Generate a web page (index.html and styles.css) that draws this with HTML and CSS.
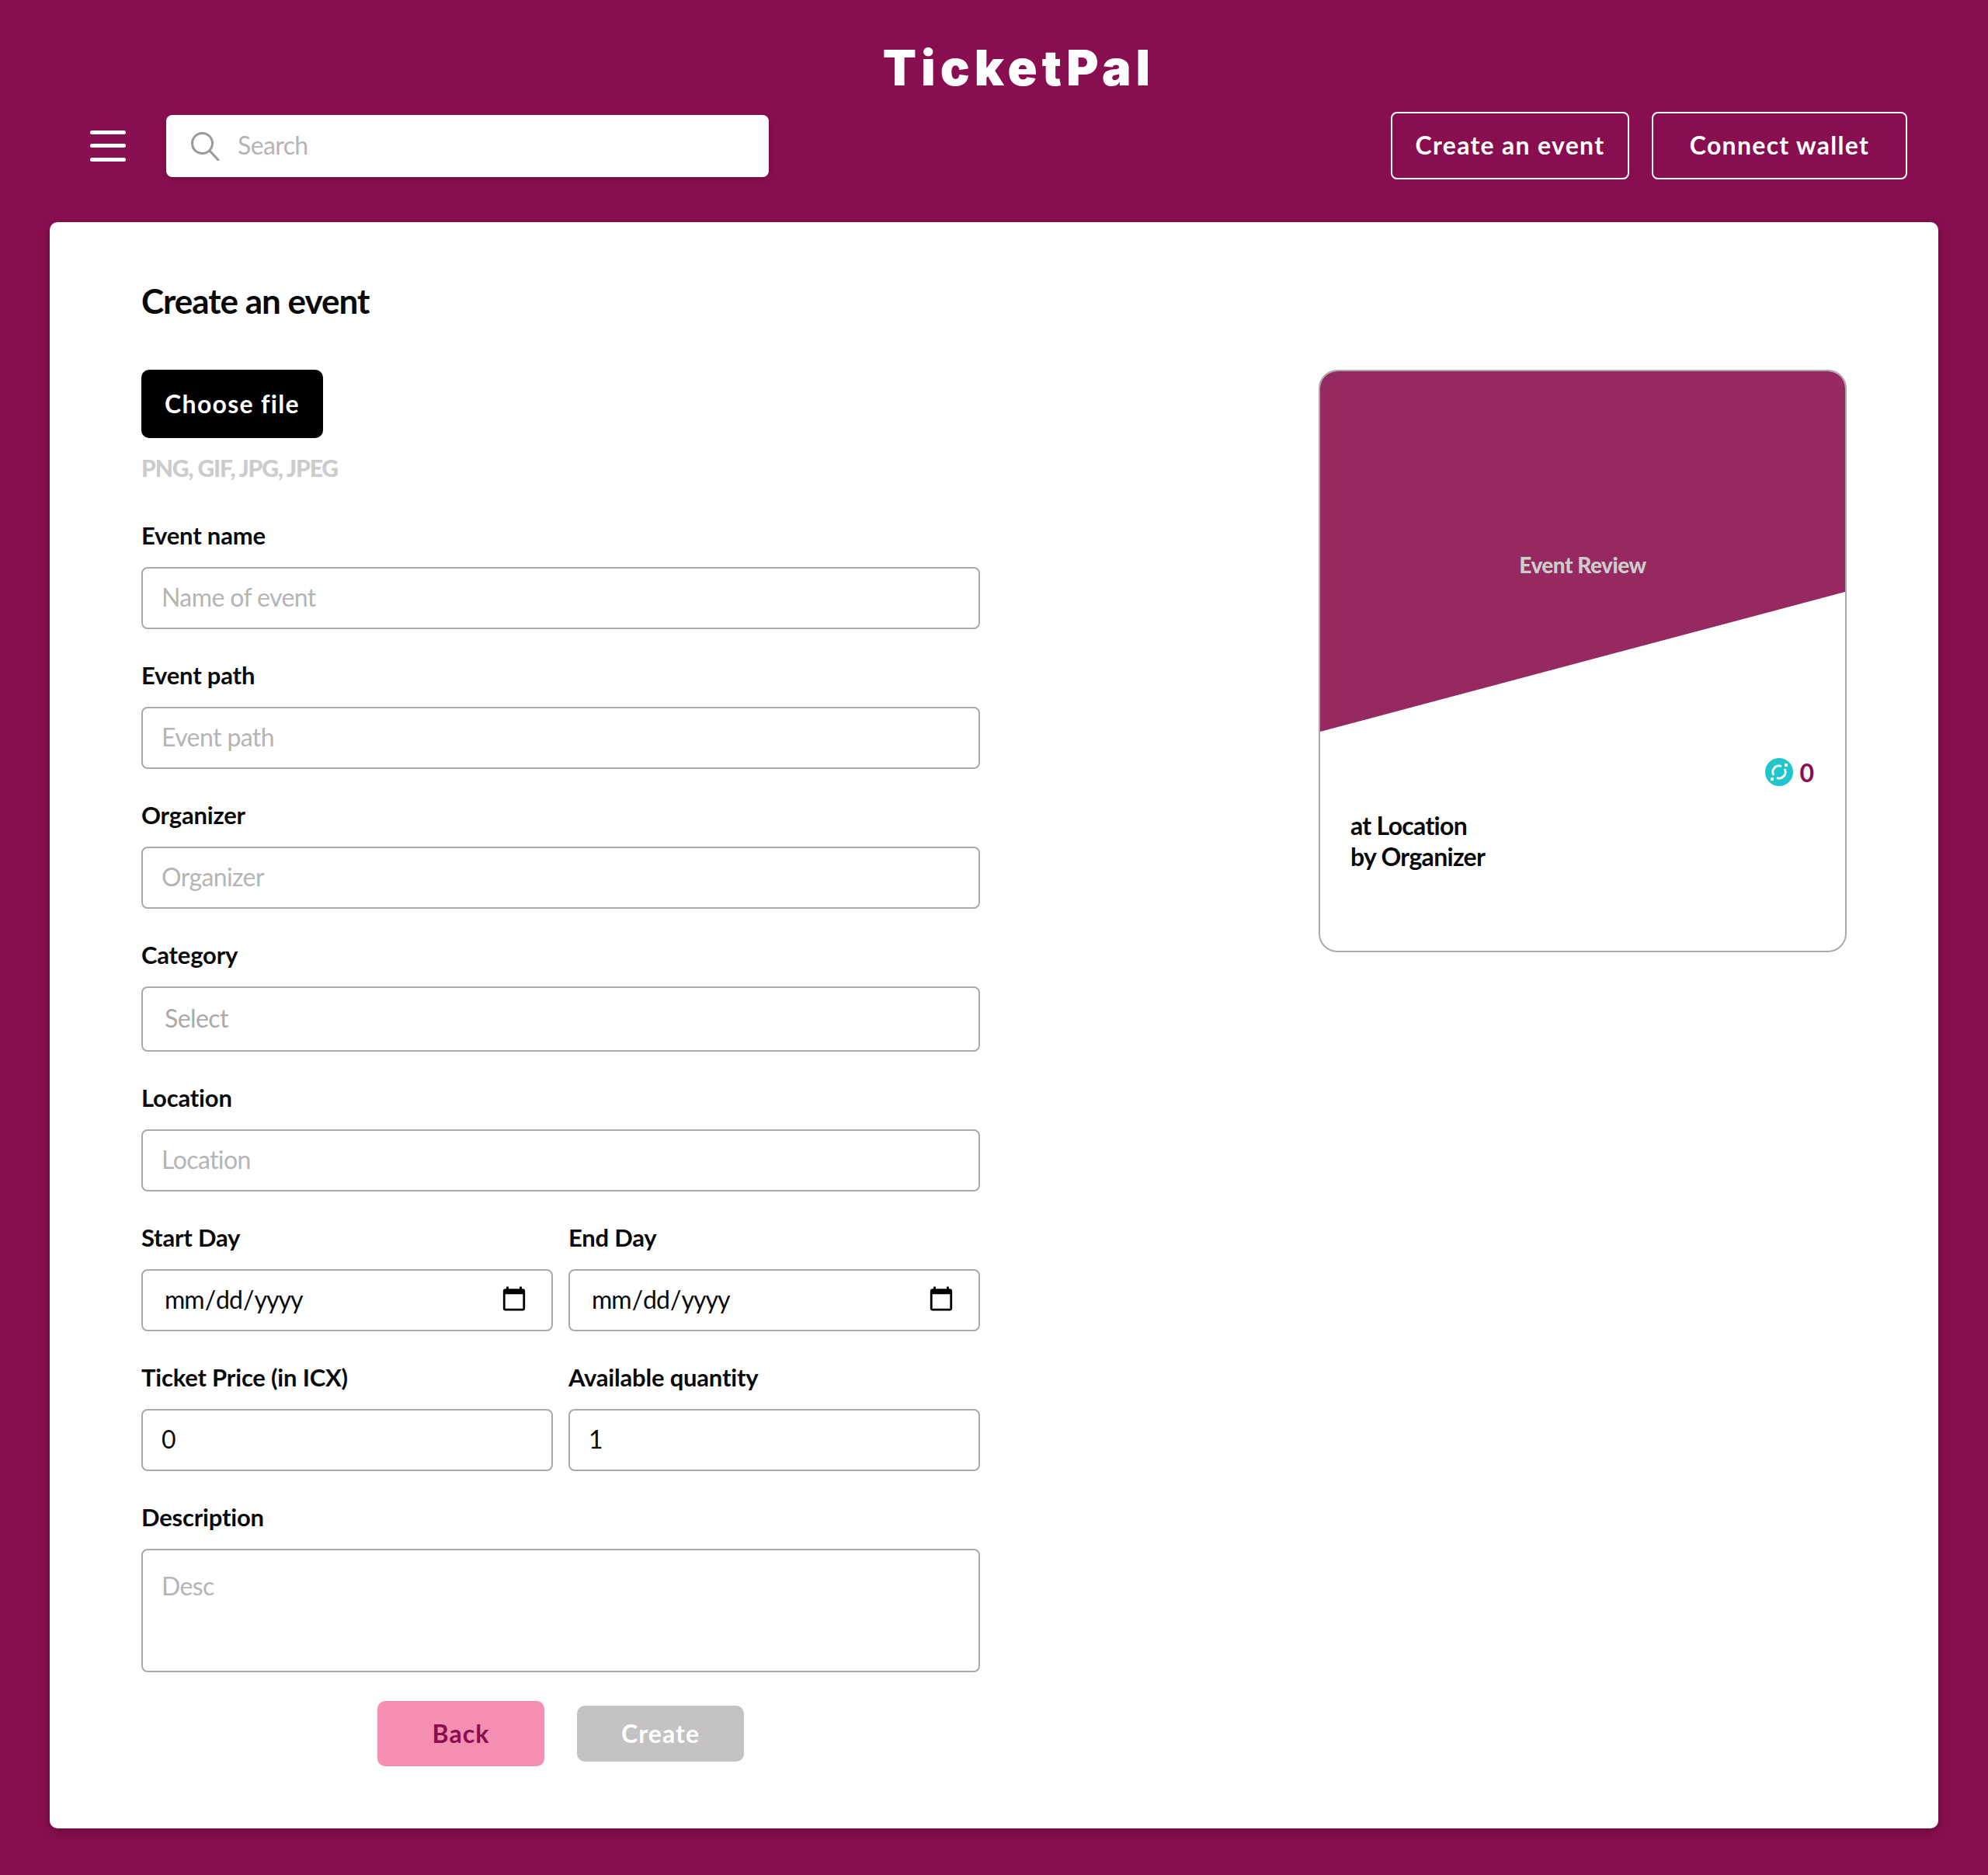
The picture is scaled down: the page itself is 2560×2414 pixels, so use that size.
FILE: index.html
```html
<!DOCTYPE html>
<html lang="en">
<head>
  <meta charset="UTF-8">
  <title>TicketPal</title>
  <link rel="stylesheet" href="styles.css">
</head>
<body>
  <header class="site-header">
    <h1 class="brand">TicketPal</h1>
    <div class="nav-row">
      <div class="menu-icon"><span></span><span></span><span></span></div>
      <div class="search-box">
        <svg class="search-icon" viewBox="0 0 38 38" fill="none" stroke="#999" stroke-width="3">
          <circle cx="15.5" cy="15.5" r="13"/>
          <path d="M25 25 L36 37" stroke-linecap="round"/>
        </svg>
        <input class="search-input" type="text" placeholder="Search">
      </div>
      <div class="nav-actions">
        <button class="outline-btn create-link">Create an event</button>
        <button class="outline-btn wallet-link">Connect wallet</button>
      </div>
    </div>
  </header>

  <main class="panel">
    <section class="form-col">
      <h2 class="page-title">Create an event</h2>
      <button class="file-btn">Choose file</button>
      <p class="file-hint">PNG, GIF, JPG, JPEG</p>

      <div class="form-group">
        <label for="name">Event name</label>
        <input id="name" type="text" placeholder="Name of event">
      </div>
      <div class="form-group">
        <label for="path">Event path</label>
        <input id="path" type="text" placeholder="Event path">
      </div>
      <div class="form-group">
        <label for="organizer">Organizer</label>
        <input id="organizer" type="text" placeholder="Organizer">
      </div>
      <div class="form-group">
        <label for="category">Category</label>
        <select id="category">
          <option>Select</option>
        </select>
      </div>
      <div class="form-group">
        <label for="location">Location</label>
        <input id="location" type="text" placeholder="Location">
      </div>
      <div class="form-row">
        <div class="form-group">
          <label for="start">Start Day</label>
          <input id="start" type="date">
        </div>
        <div class="form-group">
          <label for="end">End Day</label>
          <input id="end" type="date">
        </div>
      </div>
      <div class="form-row">
        <div class="form-group">
          <label for="price">Ticket Price (in ICX)</label>
          <input id="price" type="text" value="0">
        </div>
        <div class="form-group">
          <label for="qty">Available quantity</label>
          <input id="qty" type="text" value="1">
        </div>
      </div>
      <div class="form-group desc-group">
        <label for="desc">Description</label>
        <textarea id="desc" placeholder="Desc"></textarea>
      </div>
      <div class="form-actions">
        <button class="back-btn">Back</button>
        <button class="create-btn">Create</button>
      </div>
    </section>

    <aside class="preview-card">
      <div class="preview-cover">
        <span class="preview-title">Event Review</span>
      </div>
      <div class="preview-price">
        <svg class="icx-icon" viewBox="0 0 36 36">
          <circle cx="18" cy="18" r="18" fill="#1fc6cb"/>
          <path d="M21 10.6 A8 8 0 0 0 11 22" fill="none" stroke="#fff" stroke-width="2.8"/>
          <path d="M15 25.4 A8 8 0 0 0 25 14" fill="none" stroke="#fff" stroke-width="2.8"/>
          <rect x="25" y="7" width="4" height="4" rx="0.5" fill="#fff"/>
          <rect x="7" y="25" width="4" height="4" rx="0.5" fill="#fff"/>
        </svg>
        <span class="price-value">0</span>
      </div>
      <div class="preview-info">
        <div>at Location</div>
        <div>by Organizer</div>
      </div>
    </aside>
  </main>
</body>
</html>
```

FILE: styles.css
```css
* {
    box-sizing: border-box;
}

body {
    margin: 0;
    min-height: 2414px;
    background: #880e4f;
    font-family: Lato, "Open Sans", sans-serif;
    color: #0a0a0a;
}

.site-header {
    height: 286px;
    padding: 52px 104px 0 116px;
}

.brand {
    margin: 0;
    height: 70px;
    line-height: 70px;
    padding-left: 52px;
    text-align: center;
    font-family: Inter, sans-serif;
    font-size: 63px;
    font-weight: 900;
    letter-spacing: 6px;
    color: #fff;
}

.nav-row {
    display: flex;
    align-items: center;
    margin-top: 22px;
    height: 87px;
}

.menu-icon {
    width: 46px;
    height: 40px;
    display: flex;
    flex-direction: column;
    justify-content: space-between;
    margin-right: 52px;
}

.menu-icon span {
    display: block;
    height: 5px;
    background: #fff;
    border-radius: 3px;
}

.search-box {
    width: 776px;
    height: 80px;
    display: flex;
    align-items: center;
    padding-left: 31px;
    background: #fff;
    border-radius: 8px;
    box-shadow: 0 4px 12px rgba(0, 0, 0, 0.12);
}

.search-icon {
    width: 38px;
    height: 38px;
    flex: none;
    margin-right: 23px;
}

input::placeholder,
textarea::placeholder {
    color: #b5b5b5;
    opacity: 1;
}

.nav-actions {
    margin-left: auto;
    display: flex;
    gap: 29px;
}

.outline-btn {
    height: 87px;
    background: transparent;
    border: 2px solid #fff;
    border-radius: 8px;
    color: #fff;
    font-family: inherit;
    font-size: 32px;
    font-weight: 700;
    letter-spacing: 1.3px;
    padding: 0 0 2px;
}

.create-link {
    width: 307px;
}

.wallet-link {
    width: 329px;
}

.panel {
    margin: 0 64px;
    height: 2068px;
    padding: 0 118px;
    display: flex;
    justify-content: space-between;
    align-items: flex-start;
    background: #fff;
    border-radius: 10px;
    box-shadow: 0 4px 16px rgba(0, 0, 0, 0.22);
}

.form-col {
    width: 1080px;
}

.page-title {
    margin: 0;
    padding-top: 73px;
    height: 190px;
    line-height: 56px;
    font-size: 44px;
    font-weight: 700;
    letter-spacing: -1px;
}

.file-btn {
    display: block;
    width: 234px;
    height: 88px;
    border: none;
    border-radius: 10px;
    background: #000;
    color: #fff;
    font-family: inherit;
    font-size: 32px;
    font-weight: 700;
    letter-spacing: 1.3px;
    padding: 0 0 2px;
}

.file-hint {
    margin: 18px 0 47px;
    height: 40px;
    line-height: 40px;
    font-size: 30px;
    font-weight: 900;
    letter-spacing: -1.1px;
    color: #ccc;
}

.form-group {
    margin-bottom: 39px;
    flex: 1;
    min-width: 0;
}

label {
    display: block;
    height: 40px;
    line-height: 40px;
    margin-bottom: 21px;
    font-size: 31px;
    font-weight: 700;
    letter-spacing: -0.2px;
}

input,
select,
textarea {
    display: block;
    width: 100%;
    height: 80px;
    padding: 0 24px 3px;
    border: 2px solid #aaa;
    border-radius: 8px;
    background: #fff;
    font-family: inherit;
    font-size: 32px;
    letter-spacing: -0.6px;
    color: #0a0a0a;
}

.search-box input {
    flex: 1;
    width: auto;
    height: 60px;
    border: none;
    border-radius: 0;
    padding: 0 0 3px;
    outline: none;
    background: transparent;
}

select {
    height: 84px;
    padding-left: 28px;
    appearance: none;
    color: #aaa;
}

input[type="date"] {
    padding-right: 30px;
    padding-left: 27px;
    letter-spacing: -1px;
}

input[type="date"]::-webkit-calendar-picker-indicator {
    width: 36px;
    height: 36px;
    margin: 0;
    padding: 0;
}

.form-row {
    display: flex;
    gap: 20px;
}

textarea {
    height: 159px;
    padding-top: 26px;
    resize: none;
}

.desc-group {
    margin-bottom: 37px;
}

.form-actions {
    display: flex;
    align-items: center;
    gap: 42px;
    padding-left: 304px;
}

.back-btn,
.create-btn {
    width: 215px;
    border: none;
    border-radius: 10px;
    font-family: inherit;
    font-size: 32px;
    font-weight: 700;
    letter-spacing: 1.1px;
    padding: 0 0 2px;
}

.back-btn {
    height: 84px;
    background: #f48fb1;
    color: #880e4f;
}

.create-btn {
    height: 72px;
    background: #c4c2c3;
    color: #fff;
}

.preview-card {
    width: 680px;
    height: 750px;
    margin-top: 190px;
    border: 2px solid #aaa;
    border-radius: 24px;
    overflow: hidden;
    background: #fff;
}

.preview-cover {
    height: 464px;
    display: flex;
    justify-content: center;
    padding-top: 229px;
    background: #952960;
    clip-path: polygon(0 0, 100% 0, 100% 61.2%, 0 100%);
}

.preview-title {
    line-height: 40px;
    font-size: 28px;
    font-weight: 900;
    letter-spacing: -0.5px;
    color: #ccc;
}

.preview-price {
    display: flex;
    align-items: center;
    justify-content: flex-end;
    gap: 8px;
    margin-top: 34px;
    padding-right: 40px;
    height: 36px;
}

.icx-icon {
    width: 36px;
    height: 36px;
}

.price-value {
    font-size: 32px;
    font-weight: 700;
    color: #880e4f;
}

.preview-info {
    margin-top: 31px;
    padding-left: 39px;
    font-size: 32px;
    line-height: 40px;
    font-weight: 700;
    letter-spacing: -0.7px;
}
```
